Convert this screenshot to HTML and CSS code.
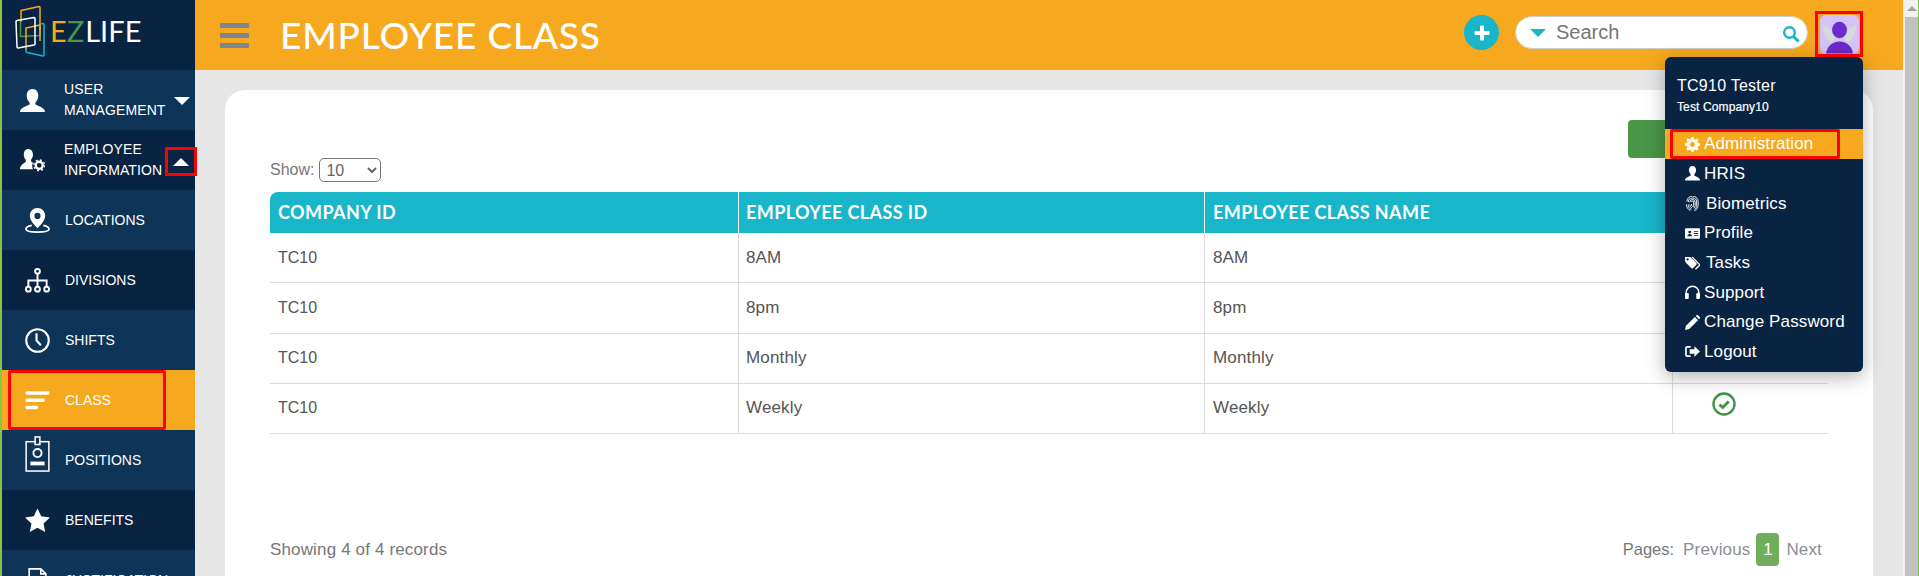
FILE: index.html
```html
<!DOCTYPE html>
<html lang="en">
<head>
<meta charset="utf-8">
<title>Employee Class</title>
<link rel="stylesheet" href="styles.css">
</head>
<body>
<div class="app">
  <aside class="sidebar">
    <div class="brand">
      <svg class="brand-mark" viewBox="14 4 32 54" width="32" height="54" fill="none" stroke-width="1.500" stroke-linejoin="round">
        <path d="M21 22V10.500L39 6.500Q40 6.500 40 7.500V30" stroke="#f6a91e"/>
        <path d="M20.500 22V36.500L40 35.500V30" stroke="#4a9748"/>
        <path d="M40 24L43 23.500Q44 23.500 44 24.500V55Q44 56 43 56L27 52.500Q26 52.500 26 51V50" stroke="#19b5c9"/>
        <path d="M26 50V28L40 25V41" stroke="#f6a91e"/>
        <path d="M16 21.500Q16 20.500 17 20.500L34 17.500Q35 17.500 35 18.500V44Q35 45 34 45L18 48Q17 48 17 47Z" stroke="#fff"/>
      </svg>
      <div class="brand-name"><span class="b-o">E</span><span class="b-g">Z</span><span class="b-w">LIFE</span></div>
    </div>
    <nav>
      <a class="nav-row alt two">
        <svg class="ni ni-u" viewBox="0 0 26 24"><path fill="#fff" d="M13 0c4 0 6 3 6 7 0 3-1 5-3 7v2c2 2 10 3 10 8H0c0-5 8-6 10-8v-2C8 12 7 10 7 7c0-4 2-7 6-7z"/></svg>
        <span class="nav-label">USER<br>MANAGEMENT</span>
        <i class="tri down"></i>
      </a>
      <a class="nav-row two">
        <svg class="ni ni-u" viewBox="0 0 26 24"><path fill="#fff" d="M8.500 0c3 0 5 2.500 5 6 0 2-1 4-2 5v2l2 1c-1 2-1 5 0 7H0c0-5 5-6 6-8v-2C4.500 10 4 8 4 6c0-3.500 1.500-6 4.500-6z"/><circle cx="20" cy="17" r="3.700" fill="none" stroke="#fff" stroke-width="2.400"/><circle cx="20" cy="17" r="5.600" fill="none" stroke="#fff" stroke-width="1.400" stroke-dasharray="2 2.400"/></svg>
        <span class="nav-label">EMPLOYEE<br>INFORMATION</span>
        <span class="mark-chevron"><i class="tri up"></i></span>
      </a>
      <a class="nav-row alt">
        <svg class="ni" viewBox="0 0 26 26" fill="none" stroke="#fff"><path fill="#fff" stroke="none" fill-rule="evenodd" d="M13 0c4.500 0 8 3.500 8 8 0 5-5 10-8 13-3-3-8-8-8-13 0-4.500 3.500-8 8-8zm0 5a3.200 3.200 0 1 0 0 6.400A3.200 3.200 0 0 0 13 5z"/><path stroke-width="1.800" d="M7 18c-3.500.7-6 2-6 3.800C1 24 6.500 25 13 25s12-1 12-3.200c0-1.800-2.500-3.100-6-3.800"/></svg>
        <span class="nav-label">LOCATIONS</span>
      </a>
      <a class="nav-row">
        <svg class="ni" viewBox="0 0 26 26" fill="none" stroke="#fff" stroke-width="2"><circle cx="13" cy="3.500" r="2.500"/><circle cx="3.500" cy="22" r="2.500"/><circle cx="13" cy="22" r="2.500"/><circle cx="22.500" cy="22" r="2.500"/><path d="M13 6v13.500M3.500 19.500V13h19v6.500"/></svg>
        <span class="nav-label">DIVISIONS</span>
      </a>
      <a class="nav-row alt">
        <svg class="ni" viewBox="0 0 26 26" fill="none" stroke="#fff" stroke-width="2.200"><circle cx="13" cy="13" r="11.700"/><path d="M12 5.500V13l4.500 5"/></svg>
        <span class="nav-label">SHIFTS</span>
      </a>
      <a class="nav-row active">
        <svg class="ni" viewBox="0 0 26 20" fill="#fff"><rect x="0.500" y="0.500" width="25" height="3.500" rx="1.500"/><rect x="0.500" y="8" width="20" height="3.500" rx="1.500"/><rect x="0.500" y="15.500" width="13" height="3.500" rx="1.500"/></svg>
        <span class="nav-label">CLASS</span>
        <span class="mark-class"></span>
      </a>
      <a class="nav-row alt">
        <svg class="ni ni-id" viewBox="0 0 26 38" fill="none" stroke="#fff" stroke-width="1.600"><rect x="1" y="6" width="24" height="31"/><rect x="10.500" y="1" width="5" height="8" fill="#0e3458"/><circle cx="13" cy="18" r="4.300" stroke-width="2"/><rect x="5.500" y="27" width="15" height="4" fill="#fff" stroke="none"/></svg>
        <span class="nav-label">POSITIONS</span>
      </a>
      <a class="nav-row">
        <svg class="ni" viewBox="0 0 26 25"><path fill="#fff" d="M13 0l3.900 8.200 9 1.200-6.600 6.200 1.700 8.900L13 20.100 5 24.500l1.700-8.900L.1 9.400l9-1.200z"/></svg>
        <span class="nav-label">BENEFITS</span>
      </a>
      <a class="nav-row alt">
        <svg class="ni" viewBox="0 0 26 30" fill="none" stroke="#fff" stroke-width="2"><path d="M3 1h14l6 6v22H3zM17 1v6h6"/></svg>
        <span class="nav-label">JUSTIFICATION</span>
      </a>
    </nav>
  </aside>

  <div class="main">
    <header class="topbar">
      <div class="burger"><span></span><span></span><span></span></div>
      <h1 class="title">EMPLOYEE CLASS</h1>
      <div class="top-tools">
        <button class="add" type="button" aria-label="Add">
          <svg viewBox="0 0 16 16" width="16" height="16"><path fill="#fff" d="M6 1.500a1 1 0 0 1 1-1h2a1 1 0 0 1 1 1V6h4.500a1 1 0 0 1 1 1v2a1 1 0 0 1-1 1H10v4.500a1 1 0 0 1-1 1H7a1 1 0 0 1-1-1V10H1.500a1 1 0 0 1-1-1V7a1 1 0 0 1 1-1H6z"/></svg>
        </button>
        <div class="search">
          <i class="search-tri"></i>
          <span class="search-text">Search</span>
          <svg class="search-icon" viewBox="0 0 18 18" width="18" height="18" fill="none" stroke="#19b5c9"><circle cx="7.500" cy="7.500" r="5.300" stroke-width="2.400"/><path d="M11.500 11.500L16.500 16.500" stroke-width="3"/></svg>
        </div>
        <div class="avatar-mark">
          <svg class="avatar" viewBox="0 0 39 39" width="39" height="39">
            <rect width="39" height="39" rx="6" fill="#d4c3f6"/>
            <path d="M10 13c-4-1-6-2-7-3 0 8 3 15 9 18l3-6zM29 13c4-1 6-2 7-3 0 8-3 15-9 18l-3-6z" fill="#d9d9dc"/>
            <ellipse cx="19.500" cy="15" rx="7.500" ry="8.300" fill="#6a2bc9"/>
            <path d="M6 38.500c1-7 6-12 13.500-12S32 31.500 33 38.500z" fill="#6a2bc9"/>
          </svg>
        </div>
      </div>
    </header>

    <div class="content">
      <section class="card">
        <div class="actions"><button class="primary" type="button" aria-label="Add class"></button></div>
        <div class="show">
          <label class="show-label" for="pagesize">Show:</label>
          <select id="pagesize" class="show-select"><option>10</option></select>
        </div>
        <table class="grid">
          <thead>
            <tr><th class="c1">COMPANY ID</th><th class="c2">EMPLOYEE CLASS ID</th><th class="c3">EMPLOYEE CLASS NAME</th><th class="c4"></th></tr>
          </thead>
          <tbody>
            <tr><td class="co">TC10</td><td>8AM</td><td class="nm">8AM</td><td class="status"></td></tr>
            <tr><td class="co">TC10</td><td>8pm</td><td class="nm">8pm</td><td class="status"></td></tr>
            <tr><td class="co">TC10</td><td>Monthly</td><td class="nm">Monthly</td><td class="status"></td></tr>
            <tr><td class="co">TC10</td><td>Weekly</td><td class="nm">Weekly</td><td class="status">
              <svg class="check" viewBox="0 0 24 24" width="24" height="24" fill="none"><circle cx="12" cy="12" r="10.500" stroke="#3f9447" stroke-width="2.400"/><path d="M7.500 12.500l3.200 3 6-6" stroke="#3f9447" stroke-width="3"/></svg>
            </td></tr>
          </tbody>
        </table>
        <div class="foot">
          <span class="records">Showing 4 of 4 records</span>
          <div class="pager">
            <span class="pg-label">Pages:</span>
            <span class="pg-link">Previous</span>
            <span class="pg-current">1</span>
            <span class="pg-link">Next</span>
          </div>
        </div>
      </section>
    </div>

    <div class="menu">
      <div class="menu-head">
        <div class="menu-name">TC910 Tester</div>
        <div class="menu-co">Test Company10</div>
      </div>
      <a class="menu-row active"><span class="mark-admin"></span>
        <svg class="mi" viewBox="0 0 16 16"><path fill="#fff" fill-rule="evenodd" d="M6.700 0h2.600l.4 2.200 1.300.6L12.900 1.500l1.700 1.700-1.300 1.900.6 1.300L16 6.700v2.600l-2.100.4-.6 1.300 1.300 1.900-1.700 1.700-1.900-1.300-1.300.6-.4 2.100H6.700l-.4-2.100-1.300-.6-1.900 1.300-1.700-1.700 1.300-1.900-.6-1.300L0 9.300V6.700l2.100-.4.6-1.300-1.300-1.900 1.700-1.700 1.900 1.300 1.300-.6zM8 5.400a2.600 2.600 0 1 0 0 5.200 2.600 2.600 0 0 0 0-5.200z"/></svg>
        <span>Administration</span></a>
      <a class="menu-row">
        <svg class="mi" viewBox="0 0 16 16"><path fill="#fff" d="M8 0c2.600 0 3.800 2 3.800 4.300 0 2-.8 3.400-1.800 4.400v1.500c1.200 1.300 6 1.600 6 5.300H0c0-3.700 4.800-4 6-5.300V8.700C5 7.700 4.200 6.300 4.200 4.300 4.200 2 5.400 0 8 0z"/></svg>
        <span>HRIS</span></a>
      <a class="menu-row wide">
        <svg class="mi" viewBox="0 0 16 16" fill="none" stroke="#fff" stroke-width="1"><path d="M2 6a6 6 0 0 1 12 0v4c0 3-2 5-4 5.500M1.500 9c0 3 2 5.500 4 6.500M3.600 6.500a4.400 4.400 0 0 1 8.800 0V10c0 2-1 3.500-2.300 4.300M3.400 9c0 2.500 1.500 4.500 3.400 5.700M5.200 6.500a2.800 2.800 0 0 1 5.600 0V10c0 1.300-.6 2.400-1.500 3M5.200 9c0 1.700 1 3.100 2.300 4.100M6.800 6.500a1.200 1.200 0 0 1 2.400 0V10c0 .7-.3 1.200-.7 1.600M6.800 8.500c0 1.200.5 2.100 1.200 2.800"/></svg>
        <span>Biometrics</span></a>
      <a class="menu-row">
        <svg class="mi" viewBox="0 0 16 16"><path fill="#fff" fill-rule="evenodd" d="M1 2.500h14a1 1 0 0 1 1 1v9a1 1 0 0 1-1 1H1a1 1 0 0 1-1-1v-9a1 1 0 0 1 1-1zM5 5a1.500 1.500 0 1 0 0 3 1.500 1.500 0 0 0 0-3zm-2.500 6h5c0-1.500-1-2.500-2.500-2.500S2.500 9.500 2.500 11zm7-5.500V6.500H14V5.500zm0 2V8.500H14V7.500zm0 2V10.500H14V9.500z"/></svg>
        <span>Profile</span></a>
      <a class="menu-row wide">
        <svg class="mi" viewBox="0 0 16 16"><path fill="#fff" fill-rule="evenodd" d="M0 2L.3 7.500l6.500 6.500c.5.500 1.200.500 1.700 0l3.700-3.700c.5-.5.5-1.200 0-1.700L5.700 2.200zM2.800 3.500a1.200 1.200 0 1 0 0 2.400 1.200 1.200 0 0 0 0-2.400z"/><path fill="none" stroke="#fff" stroke-width="1.500" d="M7.500 2.200l7.800 7.800c.3.400.3.800 0 1.100l-4.200 4.200"/></svg>
        <span>Tasks</span></a>
      <a class="menu-row">
        <svg class="mi" viewBox="0 0 16 16"><path fill="none" stroke="#fff" stroke-width="1.600" d="M1.300 10V8a6.700 6.700 0 0 1 13.400 0v2"/><rect x="0" y="8.500" width="4" height="6.500" rx="1.200" fill="#fff"/><rect x="12" y="8.500" width="4" height="6.500" rx="1.200" fill="#fff"/></svg>
        <span>Support</span></a>
      <a class="menu-row">
        <svg class="mi" viewBox="0 0 16 16"><path fill="#fff" d="M0 16l1-4.500L10.500 2l3.500 3.500L4.500 15zM11.500 1l1-1c.4-.3.8-.3 1.100 0l2.400 2.400c.3.300.3.700 0 1l-1 1.100z"/></svg>
        <span>Change Password</span></a>
      <a class="menu-row">
        <svg class="mi" viewBox="0 0 16 16"><path fill="none" stroke="#fff" stroke-width="1.800" d="M6 3H2.500C1.600 3 1 3.600 1 4.500v7c0 .9.600 1.500 1.500 1.500H6"/><path fill="#fff" d="M10 2.500L16 8l-6 5.500V10.500H5v-5h5z"/></svg>
        <span>Logout</span></a>
    </div>
  </div>

  <div class="scrollbar">
    <div class="sb-up"><i></i></div>
    <div class="sb-thumb"></div>
  </div>
</div>
</body>
</html>
```

FILE: styles.css
```css
* { box-sizing: border-box; }
html, body { margin: 0; height: 100%; overflow: hidden; }
body { font-family: "Liberation Sans", Arial, sans-serif; font-size: 16px; color: #555; background: #e6e6e6; }
a { display: flex; color: inherit; text-decoration: none; }

.app { display: flex; height: 576px; overflow: hidden; }

/* sidebar */
.sidebar { position: relative; z-index: 1; flex: 0 0 195px; border-left: 2px solid #8bc34a; background: #082442; color: #fff; }
.brand { height: 70px; display: flex; align-items: flex-start; padding: 4px 0 0 12px; }
.brand-mark { flex: none; }
.brand-name { margin: 9px 0 0 4px; font-family: Lato, sans-serif; font-size: 29px; line-height: 36px; font-weight: 400; white-space: nowrap; }
.b-o { color: #f6a91e; }
.b-g { color: #4a9748; margin-right: 1px; }
.b-w { color: #fff; }

.nav-row { position: relative; height: 60px; align-items: center; padding-left: 23px; background: #082442; font-size: 14px; line-height: 21px; }
.nav-row.alt { background: #0e3458; }
.nav-row.active { background: #f6a91e; }
.nav-row.two { padding-left: 18px; }
.ni { flex: none; width: 25px; height: 25px; margin-right: 15px; }
.ni-u { margin-right: 19px; }
.ni-id { height: 36px; margin-top: -12px; }
.nav-label { white-space: nowrap; }
.nav-row.two .nav-label { margin-top: -1px; letter-spacing: 0.12px; }
.tri { position: absolute; left: 172px; width: 0; height: 0; border-left: 8px solid transparent; border-right: 8px solid transparent; }
.tri.down { top: 27px; border-top: 8px solid #fff; }
.tri.up { position: static; display: block; border-bottom: 8px solid #fff; }
.mark-chevron { position: absolute; left: 163px; top: 17px; width: 32px; height: 29px; border: 3px solid #f00; display: flex; align-items: center; justify-content: center; }
.mark-class { position: absolute; left: 6px; top: 0; width: 158px; height: 60px; border: 3px solid #f00; border-radius: 2px; }

/* main */
.main { position: relative; flex: 1 1 auto; min-width: 0; display: flex; flex-direction: column; }
.topbar { flex: 0 0 70px; background: #f6a91e; display: flex; align-items: center; padding-left: 25px; }
.burger { display: flex; flex-direction: column; gap: 5px; width: 29px; }
.burger span { height: 5px; background: #7f858c; border-radius: 1px; }
.title { margin: 0 0 0 31px; font-family: Lato, sans-serif; font-size: 37px; line-height: 44px; font-weight: 500; color: #fff; letter-spacing: 0.85px; white-space: nowrap; }
.top-tools { margin-left: auto; margin-right: 40px; align-self: flex-start; padding-top: 11px; display: flex; align-items: flex-start; }
.add { width: 35px; height: 35px; padding: 0; margin: 4px 16px 0 0; border: 0; border-radius: 50%; background: #19b5c9; display: flex; align-items: center; justify-content: center; }
.search { width: 293px; height: 33px; margin: 5px 7px 0 0; background: #fff; border: 1px solid #ccc; border-radius: 17px; display: flex; align-items: center; padding: 0 7px 0 14px; }
.search-tri { width: 0; height: 0; border-left: 8px solid transparent; border-right: 8px solid transparent; border-top: 8px solid #19b5c9; margin-right: 10px; }
.search-text { font-size: 20px; line-height: 24px; margin-top: -2px; color: #777; }
.search-icon { margin-left: auto; margin-top: 2px; }
.avatar-mark { width: 48px; height: 46px; border: 3px solid #f00; display: flex; align-items: center; justify-content: center; }
.avatar { display: block; }

.content { flex: 1 1 auto; padding: 20px 30px 0; min-height: 0; }
.card { height: 560px; background: #fff; border-radius: 20px; padding: 30px 45px 0; }
.actions { display: flex; justify-content: flex-end; }
.primary { width: 200px; height: 38px; border: 0; border-radius: 4px; background: #4a9748; }
.show { display: flex; align-items: center; height: 24px; margin-bottom: 10px; color: #777; }
.show-label { font-size: 16px; margin-right: 5px; }
.show-select { width: 62px; height: 24px; font: 16px "Liberation Sans", Arial, sans-serif; color: #666; background: #fff; border: 1px solid #777; border-radius: 5px; padding: 0 0 0 2px; }

.grid { width: 1558px; table-layout: fixed; border-collapse: separate; border-spacing: 0; }
.c1 { width: 468px; border-top-left-radius: 8px; }
.c2 { width: 466px; }
.c3 { width: 468px; }
.c4 { width: 156px; }
.grid th { height: 41px; background: #19b5c9; color: #fff; text-align: left; padding: 0 7px 2px 8px; font-family: Lato, sans-serif; font-size: 18px; font-weight: 700; letter-spacing: 0.4px; border-left: 1px solid #e8f4f6; white-space: nowrap; }
.grid th.c2 { padding-left: 7px; }
.grid th:first-child { border-left: 0; }
.grid td { height: 50.25px; padding: 0 7px; border-bottom: 1px solid #dcdcdc; border-left: 1px solid #dcdcdc; color: #555; font-size: 17px; letter-spacing: 0.15px; }
.grid td.co { padding-left: 8px; font-size: 16px; letter-spacing: 0; border-left: 0; }
.grid td.nm { padding-left: 8px; }
.status { text-align: center; }
.check { display: block; margin: -8px auto 0; transform: translateX(-27px); }

.foot { display: flex; align-items: center; justify-content: space-between; margin-top: 99px; height: 33px; color: #777; font-size: 17px; letter-spacing: 0.15px; }
.pager { display: flex; align-items: center; padding-right: 6px; }
.pg-label { margin-right: 9px; color: #777; font-size: 16.500px; letter-spacing: 0; }
.pg-link { color: #8a8f96; }
.pg-current { width: 23px; height: 33px; margin: 0 7px 0 6px; border-radius: 4px; background: #70ae5d; color: #fff; display: flex; align-items: center; justify-content: center; }

/* profile menu */
.menu { position: absolute; top: 57px; right: 40px; width: 198px; height: 315px; padding-top: 72px; background: #082442; border-radius: 6px; box-shadow: 0 5px 20px rgba(0,0,0,.3); color: #fff; }
.menu-head { position: absolute; left: 12px; top: 18px; }
.menu-name { font-size: 16px; line-height: 22px; letter-spacing: 0.25px; }
.menu-co { font-size: 12px; line-height: 22px; margin-top: -1px; letter-spacing: 0.12px; -webkit-text-stroke: 0.2px #fff; }
.menu-row { position: relative; height: 29.7px; align-items: center; padding-left: 20px; font-size: 17px; letter-spacing: 0.12px; white-space: nowrap; }
.menu-row.active { background: #f6a91e; height: 30px; }
.mark-admin { position: absolute; left: 5px; top: 0; width: 170px; height: 30px; border: 3px solid #f00; border-radius: 2px; }
.mi { flex: none; width: 15px; height: 15px; margin-right: 4px; }
.menu-row.wide .mi { margin-right: 6px; }

/* fake window scrollbar */
.scrollbar { position: relative; flex: 0 0 16px; background: #f1f1f1; border-right: 1px solid #8bc34a; }
.sb-up { height: 17px; display: flex; justify-content: center; align-items: center; padding-left: 2px; }
.sb-up i { width: 0; height: 0; border-left: 5px solid transparent; border-right: 5px solid transparent; border-bottom: 5px solid #a3a3a3; }
.sb-thumb { height: 559px; margin-left: 2px; background: #c1c1c1; }
```
